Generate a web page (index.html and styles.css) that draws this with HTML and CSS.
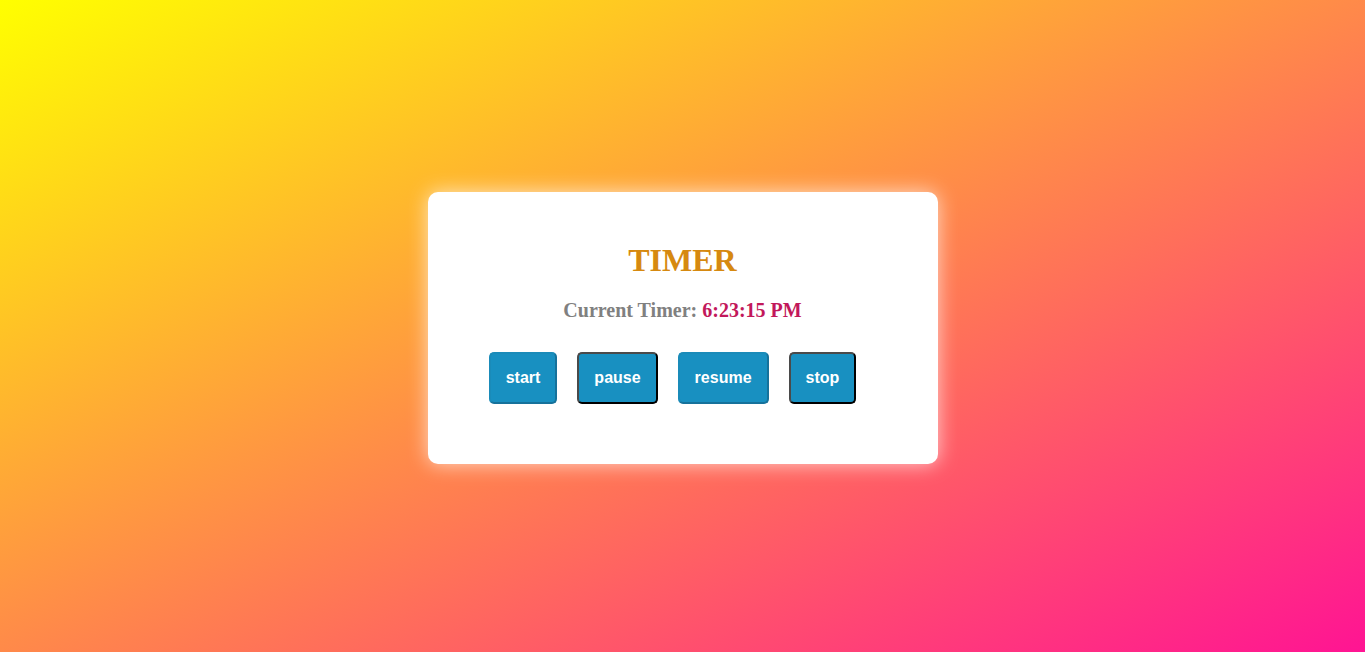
FILE: index.html
```html
<!DOCTYPE html>
<html>
<head>
<meta charset="utf-8">
<link rel="stylesheet" href="styles.css">
</head>
<body>
<div class="page">
  <div class="card">
    <h1 class="title">TIMER</h1>
    <h3 class="current">Current Timer: <span class="time">6:23:15 PM</span></h3>
    <div class="buttons">
      <button class="btn btn-soft">start</button>
      <button class="btn btn-dark">pause</button>
      <button class="btn btn-soft">resume</button>
      <button class="btn btn-dark">stop</button>
    </div>
  </div>
</div>
</body>
</html>
```
FILE: styles.css
```css
html, body {
  margin: 0;
  padding: 0;
  height: 100%;
}
body {
  background: linear-gradient(to bottom right, #ffff00, #ff1493);
  font-family: "Liberation Serif", "Times New Roman", serif;
}
.page {
  height: 652px;
  box-sizing: border-box;
  padding-top: 4px;
  display: flex;
  align-items: center;
  justify-content: center;
}
.card {
  width: 510px;
  height: 272px;
  box-sizing: border-box;
  background: #ffffff;
  border-radius: 10px;
  box-shadow: 0 0 20px rgba(255, 255, 255, 0.7);
  padding-top: 50px;
  text-align: center;
}
.title {
  margin: 0;
  font-size: 32px;
  line-height: 37px;
  font-weight: bold;
  color: #d68910;
}
.current {
  margin: 20px 0 0 0;
  font-size: 20px;
  line-height: 23px;
  font-weight: bold;
  color: #808080;
}
.time {
  color: #c2185b;
}
.buttons {
  margin-top: 30px;
  display: flex;
  justify-content: center;
}
.btn {
  margin-right: 20px;
  padding: 15px;
  border-width: 2px;
  border-style: solid;
  border-radius: 5px;
  background: #1890c1;
  color: #ffffff;
  font-family: "Liberation Sans", Arial, sans-serif;
  font-size: 16px;
  line-height: 18px;
  font-weight: bold;
}
.btn-soft {
  border-color: #1a8bb9 #16729b #16729b #1a8bb9;
}
.btn-dark {
  border-color: #4a4a4a #000000 #000000 #4a4a4a;
}
```
